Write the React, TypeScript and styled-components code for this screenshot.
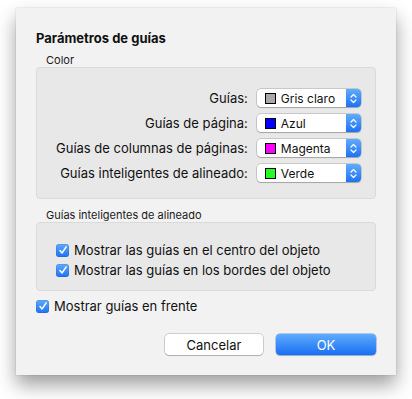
import React from "react";
import styled, { createGlobalStyle } from "styled-components";

const Global = createGlobalStyle`
  html, body { margin: 0; padding: 0; background: #ffffff; }
  body { font-family: Inter, "Noto Sans", "Liberation Sans", sans-serif; color: #111; -webkit-font-smoothing: antialiased; }
  * { box-sizing: border-box; }
`;

const Page = styled.div`
  padding: 8px 0 0 16px;
  width: 412px;
  height: 399px;
`;

const Dialog = styled.div`
  width: 380px;
  height: 367px;
  background: #f2f2f2;
  box-shadow: 0 10px 18px rgba(0, 0, 0, 0.38), 0 0 1px rgba(0, 0, 0, 0.25);
  padding: 22px 20px 0 20px;
  display: flex;
  flex-direction: column;
`;

const Title = styled.div`
  font-size: 13px;
  font-weight: 700;
  line-height: 16px;
  height: 16px;
`;

const SectionLabel = styled.div<{ $top: number }>`
  font-size: 11px;
  line-height: 14px;
  margin: ${(p) => p.$top}px 0 0 10px;
  color: #1a1a1a;
`;

const GroupBox = styled.div<{ $pt: number; $pb: number }>`
  background: #e8e8e8;
  border: 1px solid #dadada;
  border-radius: 4px;
  padding: ${(p) => p.$pt}px 20px ${(p) => p.$pb}px 19px;
`;

const Grid = styled.div`
  display: grid;
  grid-template-columns: 1fr 104px;
  column-gap: 9px;
  row-gap: 7px;
  align-items: center;
`;

const FieldLabel = styled.div`
  font-size: 13px;
  line-height: 18px;
  text-align: right;
  white-space: nowrap;
`;

const Popup = styled.div`
  height: 18px;
  display: flex;
  align-items: stretch;
  background: #fff;
  border-radius: 4px;
  box-shadow: 0 0 0 0.5px rgba(0, 0, 0, 0.28), 0 1px 1px rgba(0, 0, 0, 0.18);
  overflow: hidden;
`;

const PopupBody = styled.div`
  flex: 1;
  display: flex;
  align-items: center;
  padding-left: 8px;
  font-size: 12px;
  gap: 5px;
`;

const Swatch = styled.span<{ $c: string }>`
  width: 11px;
  height: 11px;
  background: ${(p) => p.$c};
  border: 1px solid #000;
  display: inline-block;
`;

const Stepper = styled.div`
  width: 15px;
  background: linear-gradient(#62acfc, #1c72f4);
  display: flex;
  align-items: center;
  justify-content: center;
`;

const CheckRows = styled.div`
  display: flex;
  flex-direction: column;
  gap: 4px;
`;

const CheckRow = styled.div`
  display: flex;
  align-items: center;
  gap: 5px;
  font-size: 13px;
  line-height: 16px;
  height: 16px;
`;

const Box = styled.span`
  width: 13px;
  height: 13px;
  border-radius: 3px;
  background: linear-gradient(#5eaafc, #1e72f4);
  box-shadow: inset 0 0 0 0.5px rgba(0, 0, 0, 0.15);
  display: flex;
  align-items: center;
  justify-content: center;
`;

const Standalone = styled.div`
  margin-top: 7px;
`;

const Buttons = styled.div`
  margin-top: 20px;
  display: flex;
  justify-content: flex-end;
  gap: 13px;
`;

const Button = styled.button<{ $primary?: boolean; $w: number }>`
  width: ${(p) => p.$w}px;
  height: 21px;
  border: none;
  border-radius: 4px;
  font-family: inherit;
  font-size: 13px;
  padding: 0;
  color: ${(p) => (p.$primary ? "#fff" : "#111")};
  background: ${(p) => (p.$primary ? "linear-gradient(#5fabfc, #1a6ff3)" : "#fff")};
  box-shadow: ${(p) =>
    p.$primary
      ? "0 0 0 0.5px rgba(0,60,200,0.5), 0 1px 1px rgba(0,0,0,0.15)"
      : "0 0 0 0.5px rgba(0,0,0,0.3), 0 1px 1px rgba(0,0,0,0.15)"};
`;

const Chevrons = () => (
  <svg width="7" height="11" viewBox="0 0 7 11">
    <path d="M1 4 L3.5 1.5 L6 4 M1 7 L3.5 9.5 L6 7" fill="none" stroke="#fff" strokeWidth="1.2" strokeLinecap="round" strokeLinejoin="round" />
  </svg>
);

const Check = () => (
  <svg width="10" height="10" viewBox="0 0 10 10">
    <path d="M2 5.5 L4 8 L8.2 1.8" fill="none" stroke="#fff" strokeWidth="1.5" strokeLinecap="round" strokeLinejoin="round" />
  </svg>
);

const fields = [
  { label: "Guías:", value: "Gris claro", color: "#a9a9a9" },
  { label: "Guías de página:", value: "Azul", color: "#0000ff" },
  { label: "Guías de columnas de páginas:", value: "Magenta", color: "#ff00ff" },
  { label: "Guías inteligentes de alineado:", value: "Verde", color: "#22ff22" },
];

const CheckItem = ({ text }: { text: string }) => (
  <CheckRow>
    <Box>
      <Check />
    </Box>
    {text}
  </CheckRow>
);

export default function App() {
  return (
    <>
      <Global />
      <Page>
        <Dialog>
          <Title>Parámetros de guías</Title>
          <SectionLabel $top={7}>Color</SectionLabel>
          <GroupBox $pt={21} $pb={16}>
            <Grid>
              {fields.map((f) => (
                <React.Fragment key={f.label}>
                  <FieldLabel>{f.label}</FieldLabel>
                  <Popup>
                    <PopupBody>
                      <Swatch $c={f.color} />
                      {f.value}
                    </PopupBody>
                    <Stepper>
                      <Chevrons />
                    </Stepper>
                  </Popup>
                </React.Fragment>
              ))}
            </Grid>
          </GroupBox>
          <SectionLabel $top={9}>Guías inteligentes de alineado</SectionLabel>
          <GroupBox $pt={19} $pb={12}>
            <CheckRows>
              <CheckItem text="Mostrar las guías en el centro del objeto" />
              <CheckItem text="Mostrar las guías en los bordes del objeto" />
            </CheckRows>
          </GroupBox>
          <Standalone>
            <CheckItem text="Mostrar guías en frente" />
          </Standalone>
          <Buttons>
            <Button $w={98}>Cancelar</Button>
            <Button $w={100} $primary>
              OK
            </Button>
          </Buttons>
        </Dialog>
      </Page>
    </>
  );
}
